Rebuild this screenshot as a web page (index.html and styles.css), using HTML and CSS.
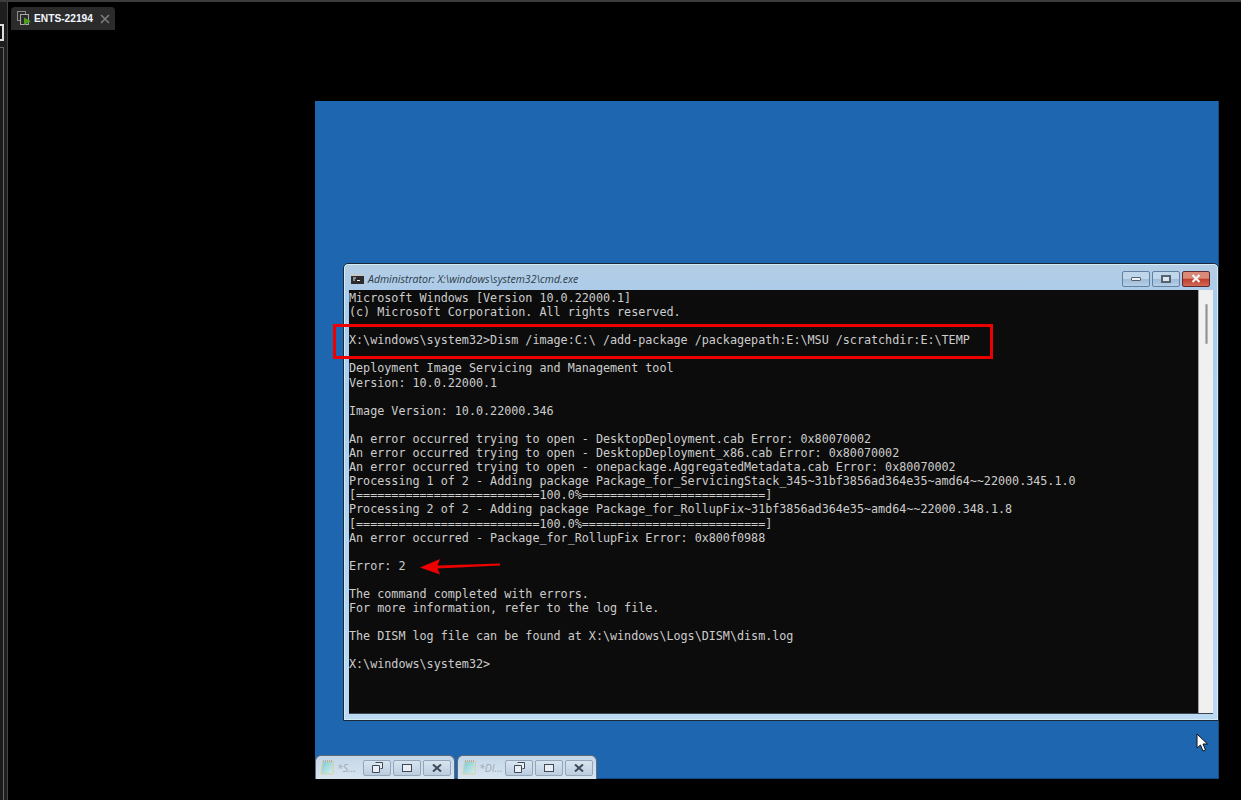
FILE: index.html
```html
<!DOCTYPE html>
<html lang="en">
<head>
<meta charset="utf-8">
<title>ENTS-22194</title>
<link rel="stylesheet" href="styles.css">
</head>
<body>
<div class="app">
  <aside class="rail">
    <span class="rail-btn active"></span>
    <span class="rail-btn long"></span>
  </aside>
  <main class="main">
    <nav class="tabbar">
      <div class="tab">
        <svg class="tab-icon" width="15" height="15" viewBox="0 0 15 15">
          <rect x="0.500" y="0.500" width="8" height="9" fill="#2b2b2b" stroke="#8a8a8a"/>
          <rect x="3.500" y="3.500" width="8" height="10" fill="#2b2b2b" stroke="#a8a8a8"/>
          <path d="M7 6.500l7 3.750-7 3.750z" fill="#4f9e1c"/>
        </svg>
        <span class="tab-label">ENTS-22194</span>
        <svg class="tab-close" width="10" height="10" viewBox="0 0 10 10"><path d="M1 1l8 8M9 1l-8 8" stroke="#7d7d7d" stroke-width="1.600" fill="none"/></svg>
      </div>
    </nav>
    <section class="stage">
      <div class="desktop">
        <div class="window">
          <header class="titlebar">
            <svg class="cmd-icon" width="13" height="10" viewBox="0 0 13 10">
              <rect width="13" height="10" fill="#2b2b2b"/>
              <rect x="0" y="0" width="13" height="2" fill="#c8c8c8"/>
              <path d="M2 4h3M2 6h2M6 6.500h3" stroke="#eee" stroke-width="1"/>
            </svg>
            <span class="title-text">Administrator: X:\windows\system32\cmd.exe</span>
            <div class="caption">
              <button class="cap-btn"><span class="glyph-min"></span></button>
              <button class="cap-btn"><span class="glyph-max"></span></button>
              <button class="cap-btn close"><svg width="10" height="9" viewBox="0 0 10 9"><path d="M1.500 1l7 7M8.500 1l-7 7" stroke="#f4f4f4" stroke-width="2.200" fill="none"/></svg></button>
            </div>
          </header>
          <div class="client">
            <pre class="console">Microsoft Windows [Version 10.0.22000.1]
(c) Microsoft Corporation. All rights reserved.

X:\windows\system32&gt;Dism /image:C:\ /add-package /packagepath:E:\MSU /scratchdir:E:\TEMP

Deployment Image Servicing and Management tool
Version: 10.0.22000.1

Image Version: 10.0.22000.346

An error occurred trying to open - DesktopDeployment.cab Error: 0x80070002
An error occurred trying to open - DesktopDeployment_x86.cab Error: 0x80070002
An error occurred trying to open - onepackage.AggregatedMetadata.cab Error: 0x80070002
Processing 1 of 2 - Adding package Package_for_ServicingStack_345~31bf3856ad364e35~amd64~~22000.345.1.0
[==========================100.0%==========================]
Processing 2 of 2 - Adding package Package_for_RollupFix~31bf3856ad364e35~amd64~~22000.348.1.8
[==========================100.0%==========================]
An error occurred - Package_for_RollupFix Error: 0x800f0988

Error: 2

The command completed with errors.
For more information, refer to the log file.

The DISM log file can be found at X:\windows\Logs\DISM\dism.log

X:\windows\system32&gt;</pre>
            <div class="scrollbar"><span class="thumb"></span></div>
          </div>
        </div>
        <div class="highlight"></div>
        <svg class="arrow" width="82" height="18" viewBox="0 0 82 18">
          <path d="M0 9.500L20 1L17.500 7.500L80 5.500L80 7.500L17.500 10.500L20 16.500Z" fill="#ee0000"/>
        </svg>
        <div class="minimized">
          <div class="mini">
            <svg class="note" width="14" height="16" viewBox="0 0 14 16">
              <defs><linearGradient id="noteFill" x1="0" y1="0" x2="1" y2="1"><stop offset="0" stop-color="#7cc8d0"/><stop offset="1" stop-color="#d8f0ee"/></linearGradient></defs>
              <path d="M2.500 1.500h11l-.5 12.500H1z" fill="url(#noteFill)" stroke="#d8cfa8"/>
              <path d="M3 1h10" stroke="#8a8a8a" stroke-width="1" stroke-dasharray="1 1"/>
            </svg>
            <span class="mini-title">*S...</span>
            <button class="mini-btn"><svg width="11" height="11" viewBox="0 0 11 11"><path d="M3.500.5h7v6h-2M.5 3.500h7v7h-7z" stroke="#3d4a58" fill="#e8eef4"/></svg></button>
            <button class="mini-btn"><span class="glyph-max small"></span></button>
            <button class="mini-btn"><svg width="10" height="8" viewBox="0 0 10 8"><path d="M1 .5l8 7M9 .5l-8 7" stroke="#3d4a58" stroke-width="2" fill="none"/></svg></button>
          </div>
          <div class="mini">
            <svg class="note" width="14" height="16" viewBox="0 0 14 16">
              <path d="M2.500 1.500h11l-.5 12.500H1z" fill="url(#noteFill)" stroke="#d8cfa8"/>
              <path d="M3 1h10" stroke="#8a8a8a" stroke-width="1" stroke-dasharray="1 1"/>
            </svg>
            <span class="mini-title">*DI...</span>
            <button class="mini-btn"><svg width="11" height="11" viewBox="0 0 11 11"><path d="M3.500.5h7v6h-2M.5 3.500h7v7h-7z" stroke="#3d4a58" fill="#e8eef4"/></svg></button>
            <button class="mini-btn"><span class="glyph-max small"></span></button>
            <button class="mini-btn"><svg width="10" height="8" viewBox="0 0 10 8"><path d="M1 .5l8 7M9 .5l-8 7" stroke="#3d4a58" stroke-width="2" fill="none"/></svg></button>
          </div>
        </div>
        <svg class="cursor" width="13" height="19" viewBox="0 0 13 19">
          <path d="M1 1v14l3.500-3 2.500 6 2.500-1-2.500-6h4.500z" fill="#fff" stroke="#111" stroke-width="1"/>
        </svg>
      </div>
    </section>
  </main>
</div>
</body>
</html>
```
FILE: styles.css
```css
* { box-sizing: border-box; }
html, body { margin: 0; height: 100%; background: #000; overflow: hidden; }
.app { display: flex; width: 1241px; height: 800px; background: #000; border-top: 2px solid #3c3c3c; }
.rail { width: 8px; flex: none; background: #1e1e1e; border-right: 1px solid #444; padding-top: 22px; display: flex; flex-direction: column; gap: 6px; overflow: hidden; }
.rail-btn { display: block; flex: none; width: 8px; height: 17px; margin-left: -4px; border: 1px solid #777; background: #111; }
.rail-btn.active { border: 2px solid #ddd; }
.rail-btn.long { flex: 1; border-color: #666; margin-bottom: -4px; background: #1a1a1a; }
.main { flex: 1; display: flex; flex-direction: column; min-width: 0; }
.tabbar { height: 28px; padding: 5px 0 0 3px; flex: none; }
.tab { width: 104px; height: 23px; background: #2b2b2b; border-radius: 4px 4px 0 0; display: flex; align-items: center; padding: 0 0 0 6px; font: bold 10.200px "Liberation Sans", Arial, sans-serif; color: #f2f6ff; }
.tab-icon { flex: none; margin-right: 2px; }
.tab-label { white-space: nowrap; }
.tab-close { flex: none; margin-left: 7px; }
.stage { flex: 1; padding: 71px 0 0 307px; min-height: 0; }
.desktop { position: relative; width: 904px; height: 678px; background: #1e66b0; border-right: 1px solid #114a85; border-bottom: 1px solid #114a85; }
.window { position: absolute; left: 28px; top: 162px; width: 876px; height: 458px; background: linear-gradient(#b4cde4, #a9cbec 40px, #bcd9f4); border: 1px solid #1a2a3a; border-radius: 5px 5px 0 0; box-shadow: inset 0 0 0 1px #d4ecf4; padding: 0 5px 6px 5px; display: flex; flex-direction: column; }
.titlebar { height: 26px; flex: none; display: flex; align-items: center; padding: 4px 0 0 2px; gap: 4px; }
.cmd-icon { flex: none; }
.title-text { font: italic 10.500px "Open Sans", "Liberation Sans", sans-serif; color: #2c3a48; white-space: nowrap; }
.caption { margin-left: auto; display: flex; gap: 2px; height: 16px; margin-top: -1px; margin-right: 3px; }
.cap-btn { width: 28px; height: 16px; padding: 0; border: 1px solid #62809f; border-radius: 2px; background: linear-gradient(#c0d6ea 0 48%, #9fbcd8 52%, #b5d0e8); display: flex; align-items: center; justify-content: center; }
.cap-btn.close { width: 28px; border-color: #5e2a34; background: linear-gradient(#d98a76 0 45%, #c23b2a 50%, #cf6a55); }
.glyph-min { width: 10px; height: 4px; background: #eef2f6; border: 1px solid #56626f; border-radius: 1px; }
.glyph-max { width: 10px; height: 8px; border: 2px solid #56626f; background: #dfe6ee; display: block; }
.glyph-max.small { width: 10px; height: 8px; border-width: 1px; border-color: #3d4a58; background: #e8eef4; }
.client { flex: 1; display: flex; min-height: 0; border-bottom: 1px solid #3a4654; }
.console { flex: 1; margin: 0; padding: 1px 0 0; background: #0c0c0c; color: #cccccc; font: 11.750px/14.100px "DejaVu Sans Mono", "Liberation Mono", monospace; letter-spacing: -0.020px; overflow: hidden; white-space: pre; }
.scrollbar { width: 15px; flex: none; background: #f0f0f0; border-left: 1px solid #a0a0a0; padding-top: 14px; }
.thumb { display: block; width: 3px; height: 40px; margin-left: 6px; background: #8f8f8f; border: 1px solid #bbb; }
.highlight { position: absolute; left: 18px; top: 223px; width: 660px; height: 35px; border: 3px solid #ee0000; }
.arrow { position: absolute; left: 105px; top: 457px; }
.minimized { position: absolute; left: 0; top: 654px; display: flex; gap: 2px; }
.mini { width: 140px; height: 24px; background: linear-gradient(#c4d6e8, #d8e5f0); border: 1px solid #5f6d7b; border-bottom: 0; border-radius: 6px 6px 0 0; display: flex; align-items: center; padding: 0 3px 0 4px; }
.note { flex: none; }
.mini-title { width: 24px; flex: none; margin-left: 3px; font: italic 10.500px "Open Sans", sans-serif; color: #a0aab4; white-space: nowrap; overflow: hidden; }
.mini-btn { width: 28px; height: 16px; margin-left: 2px; padding: 0; border: 1px solid #93a6ba; border-radius: 2px; background: linear-gradient(#d8e4ef, #bccde0); display: flex; align-items: center; justify-content: center; flex: none; }
.cursor { position: absolute; left: 881px; top: 632px; }
```
